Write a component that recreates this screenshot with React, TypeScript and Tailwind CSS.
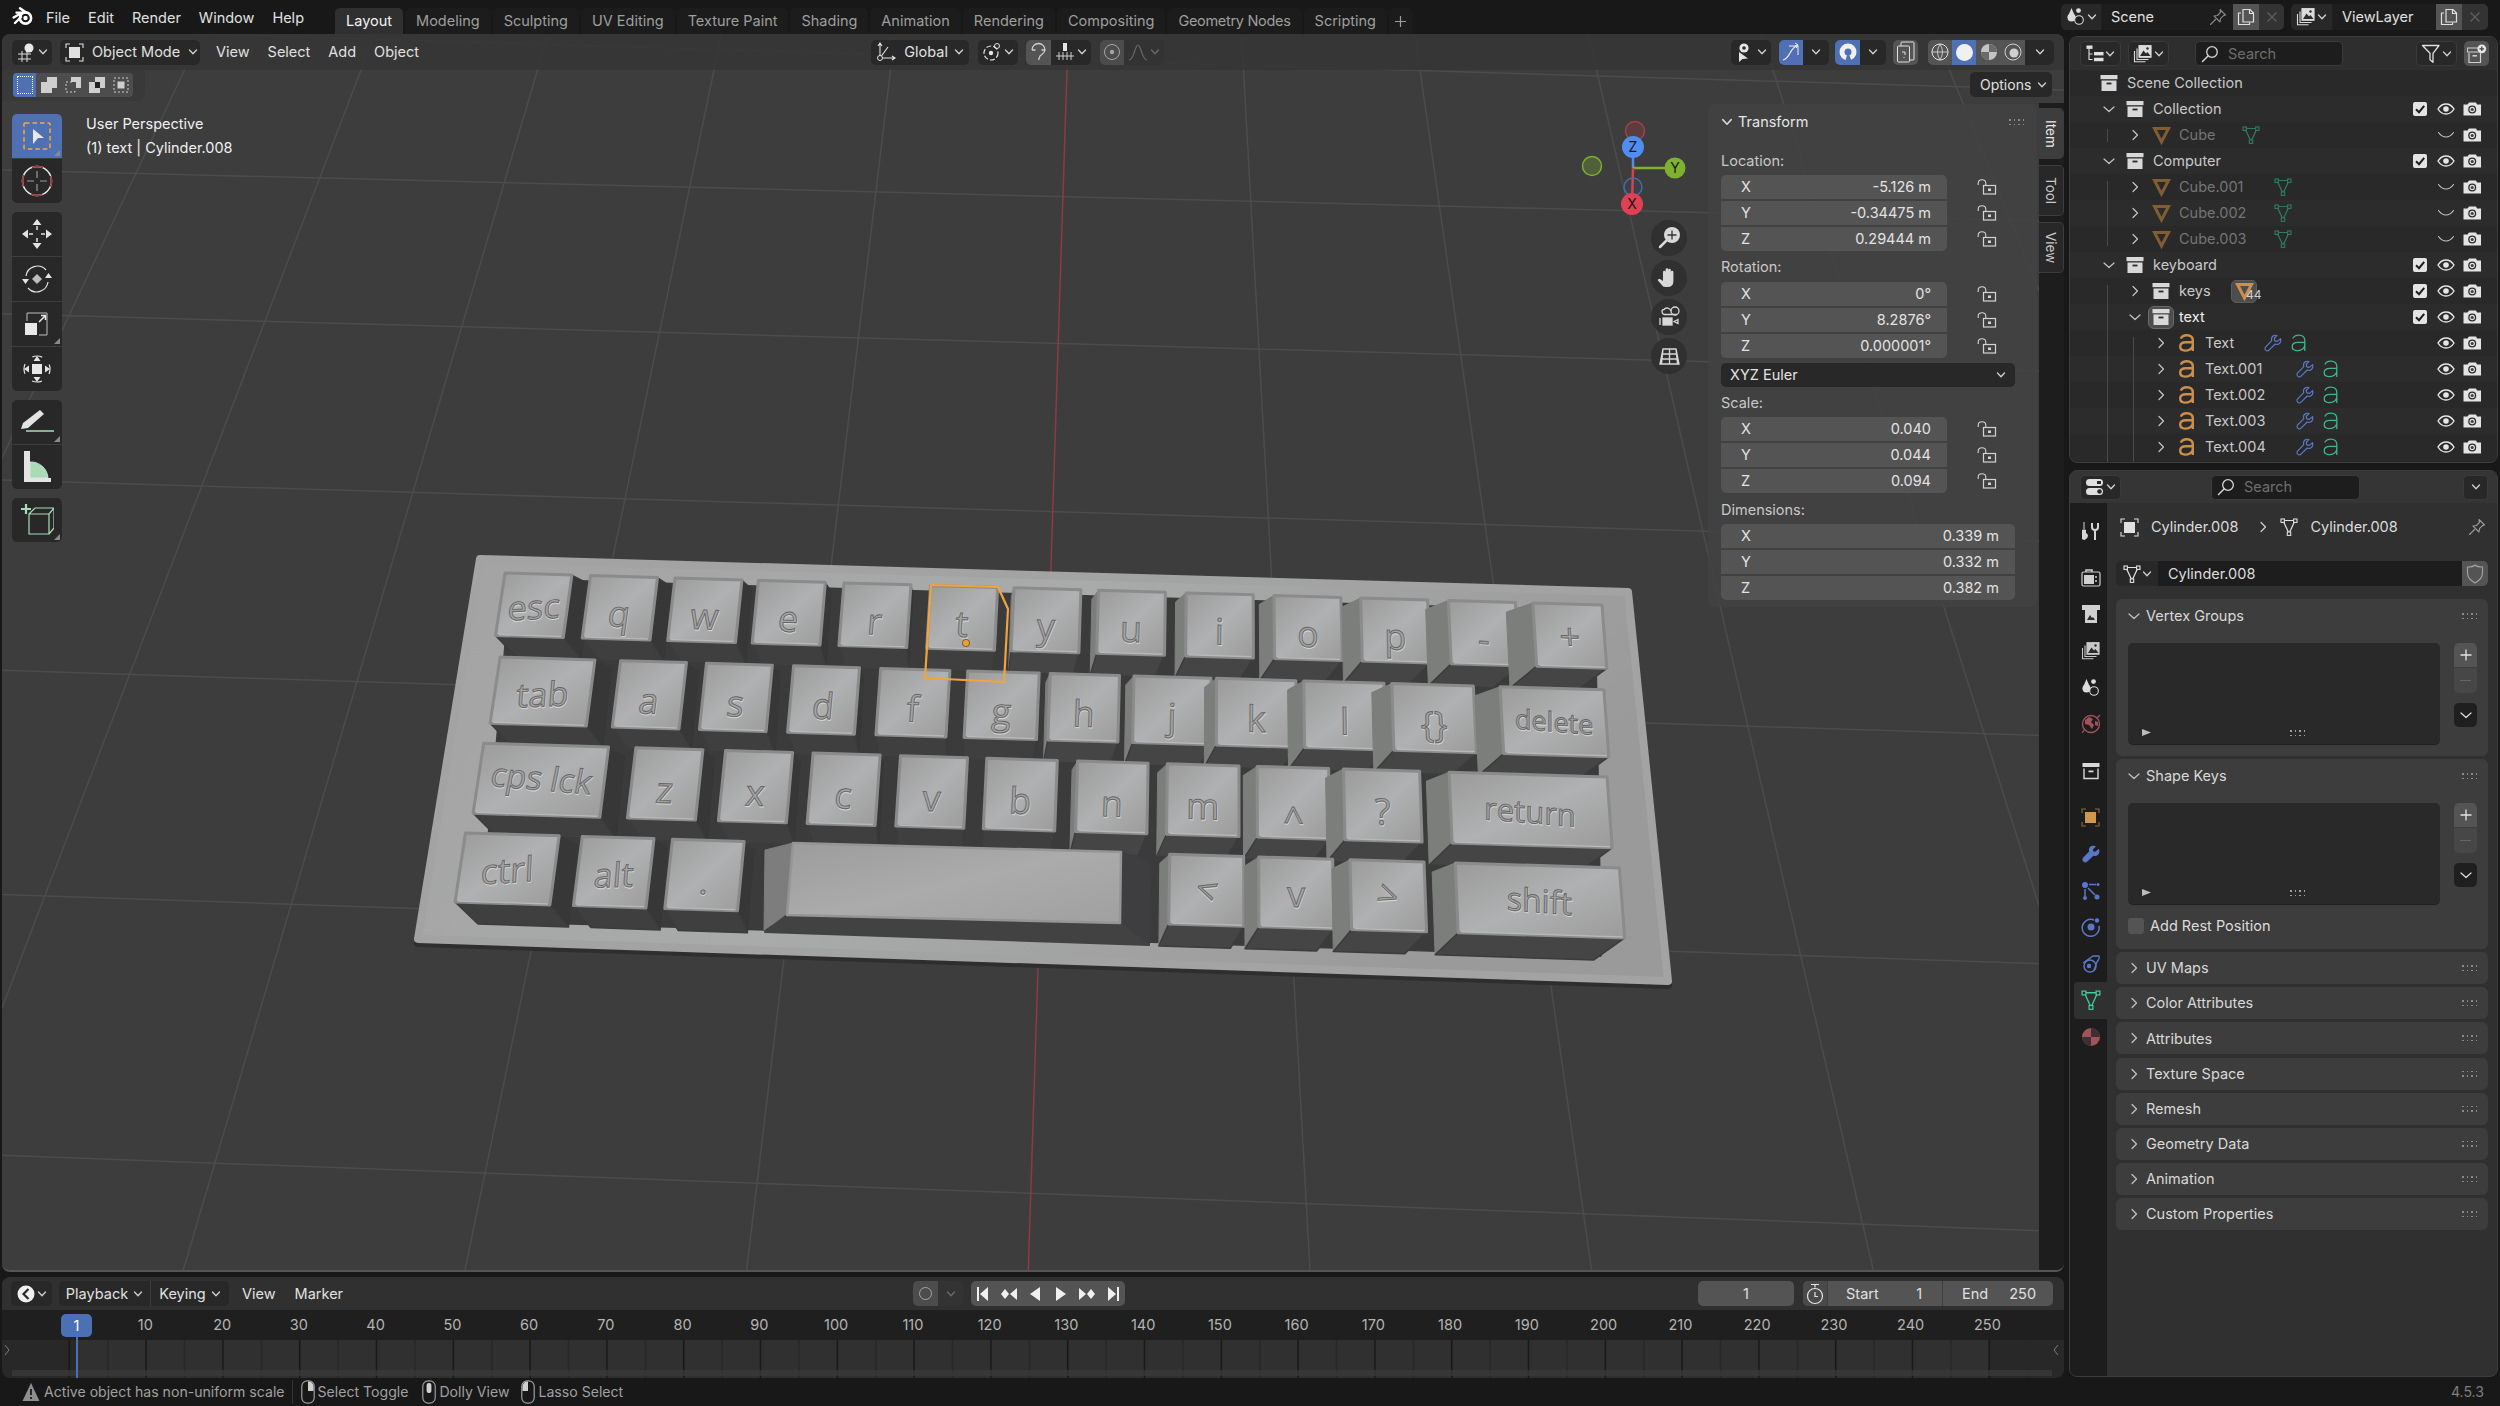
import type { ReactNode } from "react";

// ---- small icons -------------------------------------------------------

function Svg({ w = 18, h = 18, vb, children, className }: { w?: number; h?: number; vb?: string; children: ReactNode; className?: string }) {
  return (
    <svg width={w} height={h} viewBox={vb ?? `0 0 ${w} ${h}`} fill="none" className={`shrink-0 ${className ?? ""}`}>
      {children}
    </svg>
  );
}

const ChevD = ({ s = 10, className = "text-[#d0d0d0]" }: { s?: number; className?: string }) => (
  <Svg w={s} h={s} vb="0 0 10 10" className={className}>
    <path d="M1.5 3 5 6.8 8.5 3" stroke="currentColor" strokeWidth="1.3" strokeLinecap="round" strokeLinejoin="round" />
  </Svg>
);
const ChevR = ({ s = 12, className = "text-[#c4c4c4]" }: { s?: number; className?: string }) => (
  <Svg w={s} h={s} vb="0 0 12 12" className={className}>
    <path d="M4 1.5 8.5 6 4 10.5" stroke="currentColor" strokeWidth="1.2" strokeLinecap="round" strokeLinejoin="round" />
  </Svg>
);
const ChevDown12 = ({ className = "text-[#c4c4c4]" }: { className?: string }) => (
  <Svg w={12} h={12} className={className}>
    <path d="M1 4 6 8.5 11 4" stroke="currentColor" strokeWidth="1.2" strokeLinecap="round" strokeLinejoin="round" />
  </Svg>
);

const Blender = () => (
  <Svg w={22} h={20} vb="0 0 22 20">
    <circle cx="13.5" cy="12" r="5.6" stroke="#fff" strokeWidth="2.6" />
    <circle cx="13.5" cy="12" r="2.2" fill="#fff" />
    <path d="M1.6 11.5 9.5 7M4.5 6.6h7.5M8 2.2l6.5 4.6M3 17l6-6" stroke="#fff" strokeWidth="2.4" strokeLinecap="round" />
  </Svg>
);

const Box = ({ s = 18, c = "#d8d8d8" }: { s?: number; c?: string }) => (
  <Svg w={s} h={s} vb="0 0 18 18">
    <rect x="0.5" y="1" width="17" height="4.2" fill={c} />
    <path d="M1.5 6.5h15V17h-15z" fill={c} />
    <rect x="6.5" y="8.6" width="5" height="1.8" fill="#2a2a2a" />
  </Svg>
);
const BoxOutline = ({ c = "#d8d8d8" }: { c?: string }) => (
  <Svg w={18} h={18}>
    <rect x="0.5" y="1" width="17" height="4" fill={c} />
    <path d="M2 6.5v10h14v-10" stroke={c} strokeWidth="1.4" />
    <rect x="6.5" y="8.5" width="5" height="1.8" fill={c} />
  </Svg>
);

const MeshObj = ({ c = "#c98a44" }: { c?: string }) => (
  <Svg w={19} h={19}>
    <path d="M2.500 2.500h14L9.500 16z" stroke={c} strokeWidth="3" strokeLinejoin="miter" />
  </Svg>
);
const MeshData = ({ c = "#3ea07c", s = 18 }: { c?: string; s?: number }) => (
  <Svg w={s} h={s} vb="0 0 18 18">
    <path d="M3 2.5h12L9 15.5z" stroke={c} strokeWidth="1.2" fill="none" />
    <rect x="1" y="1" width="3.4" height="3.4" fill="#2a2a2a" stroke={c} strokeWidth="1.1" />
    <rect x="13.6" y="1" width="3.4" height="3.4" fill="#2a2a2a" stroke={c} strokeWidth="1.1" />
    <rect x="7.3" y="14" width="3.4" height="3.4" fill="#2a2a2a" stroke={c} strokeWidth="1.1" />
  </Svg>
);
const Wrench = ({ c = "#5a78c8", filled = false }: { c?: string; filled?: boolean }) => (
  <Svg w={18} h={18}>
    <path
      d="M16.6 4.6 13.4 7.4 10.8 6.8 10.2 4.2 13 1.6C10.8.7 8.2 1.8 7.6 4c-.3 1-.1 1.9.2 2.7L1.7 12.8c-1 1-.9 2.4 0 3.3.9.9 2.4 1 3.3 0l6.2-6.1c.9.4 1.9.5 2.9.2 2.2-.7 3.3-3.400 2.500-5.600z"
      stroke={c}
      strokeWidth="1.2"
      fill={filled ? c : "none"}
      strokeLinejoin="round"
    />
  </Svg>
);
// font object icon
const FontIcon = ({ c, sw }: { c: string; sw: number }) => (
  <Svg w={18} h={18}>
    <path
      d="M2.800 4.600C3.800 2.200 6.200 1.200 8.800 1.200c3.800 0 6 1.900 6 5.400v10.400M14.800 8.300H8c-3.400 0-5.800 1.200-5.800 4.300 0 2.700 2.100 4 4.700 4 3.800 0 7.900-1.900 7.900-5.500"
      stroke={c}
      strokeWidth={sw}
    />
  </Svg>
);

const Eye = () => (
  <Svg w={18} h={12} vb="0 0 18 12">
    <path d="M1 6c2-3.200 4.800-5 8-5s6 1.800 8 5c-2 3.200-4.800 5-8 5S3 9.200 1 6z" stroke="#e6e6e6" strokeWidth="1.400" />
    <circle cx="9" cy="6" r="2.800" fill="#e6e6e6" />
  </Svg>
);
const EyeOff = () => (
  <Svg w={18} h={12} vb="0 0 18 12">
    <path d="M1.500 3.500C4 7 6.500 8 9 8s5-1 7.500-4.500" stroke="#c4c4c4" strokeWidth="1.100" strokeLinecap="round" />
  </Svg>
);
const Cam = () => (
  <Svg w={18} h={14} vb="0 0 18 14">
    <path d="M0.500 2.500h4l1.500-2h7l1 2h4v11h-17.500z" fill="#e4e4e4" />
    <circle cx="9.200" cy="7.500" r="4" fill="#2a2a2a" />
    <circle cx="9.200" cy="7.500" r="2.700" fill="#e4e4e4" />
    <circle cx="9.200" cy="7.500" r="1.500" fill="#3a3a3a" />
  </Svg>
);
const Check = () => (
  <div className="w-[14px] h-[14px] rounded-[2px] bg-[#e4e4e4] flex items-center justify-center">
    <Svg w={12} h={12}>
      <path d="M2 6.300 5 9.200 10.200 2.800" stroke="#1e1e1e" strokeWidth="2" />
    </Svg>
  </div>
);
const Pin = ({ c = "#9a9a9a" }: { c?: string }) => (
  <Svg w={18} h={18}>
    <path d="M11 1.500 16.500 7l-2 .6-3 3-.5 3.400-6-6 3.400-.5 3-3zM6.500 11.500l-5 5" stroke={c} strokeWidth="1.100" strokeLinejoin="round" strokeLinecap="round" />
  </Svg>
);
const Copy = ({ c = "#e0e0e0" }: { c?: string }) => (
  <Svg w={18} h={18}>
    <path d="M6 1.500h7l3.500 3.500v9H6z" stroke={c} strokeWidth="1.200" />
    <path d="M4 5H1.500v11.500h11V14.500" stroke={c} strokeWidth="1.200" />
    <path d="M12.500 1.500v4h4" stroke={c} strokeWidth="1.200" />
  </Svg>
);
const X = ({ c = "#5e5e5e" }: { c?: string }) => (
  <Svg w={12} h={12}>
    <path d="M1.500 1.500l9 9m0-9l-9 9" stroke={c} strokeWidth="1.300" />
  </Svg>
);
const Scene = () => (
  <Svg w={20} h={20}>
    <path d="M5.500 1 9.500 10.500H1.500z" fill="#dcdcdc" />
    <circle cx="5.500" cy="10.500" r="4" fill="#dcdcdc" />
    <circle cx="12.500" cy="3.600" r="2.400" fill="#dcdcdc" />
    <circle cx="13" cy="13" r="4.300" fill="#1f1f1f" stroke="#dcdcdc" strokeWidth="1.100" />
  </Svg>
);
const Layers = ({ c = "#dcdcdc" }: { c?: string }) => (
  <Svg w={20} h={18} vb="0 0 20 18">
    <rect x="6" y="0.700" width="12" height="11.500" stroke={c} strokeWidth="1.200" fill={c} />
    <path d="M7 11l3.500-5.500 2.500 3 1.500-1.500 3 4z" fill="#2a2a2a" />
    <circle cx="14.500" cy="3.500" r="1.200" fill="#2a2a2a" />
    <path d="M4 3.500v11h11.500M1.500 6v10.800h11" stroke={c} strokeWidth="1.100" />
  </Svg>
);
const Search = ({ c = "#d8d8d8" }: { c?: string }) => (
  <Svg w={18} h={18}>
    <circle cx="11" cy="7" r="5.300" stroke={c} strokeWidth="1.300" />
    <path d="M7 11 1.500 16.500" stroke={c} strokeWidth="1.500" strokeLinecap="round" />
  </Svg>
);
const OutlinerIcon = () => (
  <Svg w={18} h={18}>
    <rect x="0.500" y="0.500" width="6" height="3.400" fill="#e0e0e0" />
    <path d="M3 4v10.500h3.500M3 9h3.500" stroke="#e0e0e0" strokeWidth="1.100" />
    <rect x="8" y="7" width="9.500" height="3.400" fill="#e0e0e0" />
    <rect x="8" y="12.800" width="9.500" height="3.400" fill="#e0e0e0" />
  </Svg>
);
const Funnel = () => (
  <Svg w={20} h={20}>
    <path d="M1.500 1.500h16.500L12 9.300v9l-3-2.500V9.300z" stroke="#e0e0e0" strokeWidth="1.300" strokeLinejoin="round" />
  </Svg>
);
const NewColl = () => (
  <Svg w={20} h={20}>
    <rect x="0.500" y="4" width="14" height="4" stroke="#cfcfcf" strokeWidth="1" />
    <path d="M2 9v9.500h11.500V9" stroke="#cfcfcf" strokeWidth="1.200" />
    <rect x="5.500" y="11" width="4.500" height="1.600" fill="#cfcfcf" />
    <circle cx="14.800" cy="4.800" r="4.400" fill="#e4e4e4" />
    <path d="M14.800 2.500v4.600M12.500 4.800h4.600" stroke="#444" strokeWidth="1.300" />
  </Svg>
);
const Grip = ({ c = "#8a8a8a" }: { c?: string }) => (
  <div className="grid grid-cols-4 gap-x-[3px] gap-y-[3px]">
    {[0, 1, 2, 3, 4, 5, 6, 7].map((i) => (
      <span key={i} className="w-[1.500px] h-[1.500px]" style={{ background: c }} />
    ))}
  </div>
);
const Lock = () => (
  <Svg w={20} h={16} vb="0 0 20 16">
    <path d="M1.200 6V4.200C1.200 2 3 .800 5 .800s3.800 1.200 3.800 3.400V6" stroke="#d4d4d4" strokeWidth="1.100" />
    <rect x="6.500" y="6.500" width="12" height="8.500" stroke="#d4d4d4" strokeWidth="1.200" />
    <rect x="11" y="9.500" width="3" height="2.500" fill="#d4d4d4" />
  </Svg>
);
const ObjIcon = ({ c = "#e0e0e0", inner = "#e0e0e0" }: { c?: string; inner?: string }) => (
  <Svg w={19} h={19}>
    <path d="M1 5V1h4M14 1h4v4M18 14v4h-4M5 18H1v-4" stroke={c} strokeWidth="1.100" />
    <rect x="4" y="4" width="11" height="11" fill={inner} />
  </Svg>
);
const Tri = ({ s = 7, c = "#bdbdbd" }: { s?: number; c?: string }) => (
  <Svg w={s + 2} h={s} vb="0 0 9 7">
    <path d="M0 0 9 3.500 0 7z" fill={c} />
  </Svg>
);
const Mouse = ({ b }: { b: "l" | "m" | "r" }) => (
  <Svg w={14} h={24} vb="0 0 14 24">
    <rect x="0.800" y="0.800" width="12.400" height="22.400" rx="5.500" stroke="#9e9e9e" strokeWidth="1.200" />
    {b === "l" && <path d="M7 1.500a5 5 0 0 0-5.500 5V11H7z" fill="#d0d0d0" />}
    {b === "r" && <path d="M7 1.500a5 5 0 0 1 5.500 5V11H7z" fill="#d0d0d0" />}
    {b === "m" && <rect x="4.600" y="3" width="4.800" height="10" rx="2" fill="#d0d0d0" />}
  </Svg>
);

// ---- shared widgets ----------------------------------------------------

const Btn = ({ className = "", children }: { className?: string; children: ReactNode }) => (
  <div className={`h-[25px] rounded-[5px] bg-[#282828] flex items-center justify-center ${className}`}>{children}</div>
);

const Corner = () => (
  <span className="absolute right-[2px] bottom-[2px] w-0 h-0 border-l-[6px] border-l-transparent border-b-[6px] border-b-[#8a8a8a]" />
);

function ToolBtn({ children, active, corner, first, last }: { children: ReactNode; active?: boolean; corner?: boolean; first?: boolean; last?: boolean }) {
  return (
    <div
      className={`relative h-[44px] flex items-center justify-center ${active ? "bg-[#5070b4]" : "bg-[#282828]"} ${first ? "rounded-t-[5px]" : ""} ${last ? "rounded-b-[5px]" : ""}`}
    >
      {children}
      {corner && <Corner />}
    </div>
  );
}

function FieldGroup({ rows, wide }: { rows: [string, string][]; wide?: boolean }) {
  return (
    <div className="flex">
      <div className={`flex flex-col gap-[2px] ${wide ? "w-[294px]" : "w-[226px]"}`}>
        {rows.map(([a, v], i) => (
          <div
            key={a}
            className={`h-[24px] bg-[#545454] flex items-center justify-between pl-[20px] pr-[16px] text-[#e2e2e2] text-[14.500px] ${i === 0 ? "rounded-t-[5px]" : ""} ${i === 2 ? "rounded-b-[5px]" : ""}`}
          >
            <span>{a}</span>
            <span>{v}</span>
          </div>
        ))}
      </div>
      {!wide && (
        <div className="flex flex-col gap-[10px] ml-[30px] pt-[4px]">
          {rows.map(([a]) => (
            <Lock key={a} />
          ))}
        </div>
      )}
    </div>
  );
}

const Label = ({ className = "", children }: { className?: string; children: ReactNode }) => (
  <div className={`h-[20px] flex items-center text-[#c8c8c8] text-[14.500px] ${className}`}>{children}</div>
);

// ---- keyboard drawing --------------------------------------------------

type Pt = [number, number];
const A: Pt = [505, 573];
const B: Pt = [1602, 605];
const C: Pt = [1627, 938];
const D: Pt = [455, 902];

const mix = (p: Pt, q: Pt, t: number): Pt => [p[0] + (q[0] - p[0]) * t, p[1] + (q[1] - p[1]) * t];
const P = (u: number, v: number): Pt => mix(mix(A, B, u), mix(D, C, u), v);
const poly = (pts: Pt[]) => pts.map((p) => `${p[0].toFixed(1)},${p[1].toFixed(1)}`).join(" ");

type K = { t: string; u: number; w?: number; size?: number; rot?: number; dy?: number };
const rows: { v0: number; v1: number; w: number; keys: K[] }[] = [
  {
    v0: 0,
    v1: 0.19,
    w: 0.061,
    keys: [
      { t: "esc", u: 0, size: 34, rot: -5, dy: 14 },
      { t: "q", u: 0.078 },
      { t: "w", u: 0.155 },
      { t: "e", u: 0.231 },
      { t: "r", u: 0.309 },
      { t: "t", u: 0.388 },
      { t: "y", u: 0.464 },
      { t: "u", u: 0.541 },
      { t: "i", u: 0.621 },
      { t: "o", u: 0.701 },
      { t: "p", u: 0.78 },
      { t: "-", u: 0.86 },
      { t: "+", u: 0.937, w: 0.063, dy: 14 },
    ],
  },
  {
    v0: 0.255,
    v1: 0.456,
    w: 0.059,
    keys: [
      { t: "tab", u: 0.007, w: 0.085, size: 34, rot: -4, dy: 15 },
      { t: "a", u: 0.115 },
      { t: "s", u: 0.192 },
      { t: "d", u: 0.27 },
      { t: "f", u: 0.348, w: 0.062 },
      { t: "g", u: 0.426, w: 0.064 },
      { t: "h", u: 0.5, w: 0.062 },
      { t: "j", u: 0.575, w: 0.069 },
      { t: "k", u: 0.649, w: 0.071 },
      { t: "l", u: 0.727, w: 0.072 },
      { t: "{}", u: 0.806, w: 0.073 },
      { t: "delete", u: 0.903, w: 0.093, size: 27, rot: 3, dy: 10 },
    ],
  },
  {
    v0: 0.517,
    v1: 0.73,
    w: 0.059,
    keys: [
      { t: "cps lck", u: 0.004, w: 0.11, size: 33, rot: 3, dy: 10 },
      { t: "z", u: 0.138 },
      { t: "x", u: 0.217 },
      { t: "c", u: 0.294 },
      { t: "v", u: 0.371 },
      { t: "b", u: 0.447, w: 0.062 },
      { t: "n", u: 0.527, w: 0.062 },
      { t: "m", u: 0.606, w: 0.063 },
      { t: "^", u: 0.685, w: 0.063, dy: 30 },
      { t: "?", u: 0.761, w: 0.067 },
      { t: "return", u: 0.854, w: 0.139, size: 31, rot: 3, dy: 13 },
    ],
  },
  {
    v0: 0.79,
    v1: 1,
    w: 0.062,
    keys: [
      { t: "ctrl", u: 0, w: 0.081, size: 35, rot: -6, dy: 14 },
      { t: "alt", u: 0.101, size: 34, rot: -3, dy: 15 },
      { t: ".", u: 0.179 },
      { t: "<", u: 0.609, w: 0.064, dy: 12, rot: 18 },
      { t: "v", u: 0.686, w: 0.064, dy: 14 },
      { t: ">", u: 0.765, w: 0.064, dy: 12, rot: 18 },
      { t: "shift", u: 0.856, w: 0.142, size: 32, rot: 3, dy: 12 },
    ],
  },
];

function Key({ k, v0, v1, w }: { k: K; v0: number; v1: number; w: number }) {
  const ww = k.w ?? w;
  const tl = P(k.u, v0);
  const tr = P(k.u + ww, v0);
  const br = P(k.u + ww, v1);
  const bl = P(k.u, v1);
  const off = (p: Pt, dy: number): Pt => [p[0] + 0.046 * (955 - p[0]), p[1] + dy];
  const leftSide = tl[0] > 1000;
  const tlB = off(tl, 9);
  const trB = off(tr, 9);
  const brB = off(br, 22);
  const blB = off(bl, 22);
  const c = mix(mix(tl, br, 0.5), mix(tr, bl, 0.5), 0.5);
  const ax = [tr[0] - tl[0], tr[1] - tl[1]];
  const ay = [bl[0] - tl[0], bl[1] - tl[1]];
  const la = Math.hypot(ax[0], ax[1]);
  const lb = Math.hypot(ay[0], ay[1]);
  const m = `matrix(${ax[0] / la} ${ax[1] / la} ${ay[0] / lb} ${ay[1] / lb} ${c[0]} ${c[1]}) rotate(${k.rot ?? 0})`;
  return (
    <g>
      {leftSide ? (
        <polygon points={poly([tl, bl, blB, tlB])} fill="#7c7e7c" stroke="#7c7e7c" strokeWidth="1" />
      ) : (
        <polygon points={poly([tr, br, brB, trB])} fill="#373737" stroke="#373737" strokeWidth="1" />
      )}
      <polygon points={poly([bl, br, brB, blB])} fill={leftSide ? "#454545" : "#3f3f3f"} stroke="#3c3c3c" strokeWidth="1.500" strokeLinejoin="round" />
      <polygon points={poly([tl, tr, br, bl])} fill="url(#keyTop)" stroke="#8b8b8b" strokeWidth="3" strokeLinejoin="round" />
      <line x1={bl[0] + 3} y1={bl[1] - 1} x2={br[0] - 2} y2={br[1] - 1} stroke="#b8b8b8" strokeWidth="1.500" />
      <g transform={m} fontFamily="'Open Sans', sans-serif" fontSize={k.size ?? 36} textAnchor="middle">
        <text y={(k.dy ?? 19) + 1.200} x={0.600} fill="none" stroke="#d2d2d2" strokeWidth="1">
          {k.t}
        </text>
        <text y={k.dy ?? 19} fill="#a4a4a4" stroke="#666666" strokeWidth="0.900">
          {k.t}
        </text>
      </g>
    </g>
  );
}

function ViewportArt() {
  const vp: Pt = [1132, -1944];
  const depth = [-10, -9, -8, -7, -6, -5, -4, -3, -2, -1, 1, 2, 3, 4, 5, 6, 7];
  const lineAt = (x1000: number, y: number) => vp[0] + ((x1000 - vp[0]) * (y - vp[1])) / 2944;
  const hs: [number, number][] = [
    [40, 0.03],
    [180, 0.025],
    [325, 0.028],
    [492, 0.03],
    [683, 0.032],
    [908, 0.034],
    [1170, 0.037],
  ];
  const plate: Pt[] = [
    [480, 559],
    [1628, 592],
    [1668, 981],
    [418, 939],
  ];
  return (
    <svg className="absolute inset-0" width={2062} height={1238} viewBox="2 34 2062 1238">
      <defs>
        <linearGradient id="keyTop" x1="0" y1="0" x2="1" y2="1">
          <stop offset="0" stopColor="#9a9a9a" />
          <stop offset="0.5" stopColor="#b0b1b2" />
          <stop offset="1" stopColor="#9b9b9b" />
        </linearGradient>
        <linearGradient id="plate" x1="0" y1="0" x2="1" y2="0.3">
          <stop offset="0" stopColor="#a3a3a3" />
          <stop offset="0.5" stopColor="#a9aaaa" />
          <stop offset="1" stopColor="#9a9a9a" />
        </linearGradient>
        <linearGradient id="spaceTop" x1="0" y1="0" x2="1" y2="1">
          <stop offset="0" stopColor="#9c9c9c" />
          <stop offset="0.5" stopColor="#ababab" />
          <stop offset="1" stopColor="#a0a0a0" />
        </linearGradient>
      </defs>

      {/* grid */}
      {depth.map((i) => {
        const x = 1037 + 258 * i;
        return <line key={i} x1={lineAt(x, 34)} y1={34} x2={lineAt(x, 1272)} y2={1272} stroke="#4c4c4c" strokeWidth="1.500" />;
      })}
      {hs.map(([y, s]) => (
        <line key={y} x1={0} y1={y - 400 * s} x2={2064} y2={y + 1664 * s} stroke="#4c4c4c" strokeWidth="1.500" />
      ))}
      <line x1={lineAt(1037, 34)} y1={34} x2={lineAt(1037, 1272)} y2={1272} stroke="#8c3a46" strokeWidth="1.500" />

      {/* keyboard base */}
      <polygon points={poly(plate.map((p) => [p[0], p[1] + 4] as Pt))} fill="#2e2e2e" stroke="#2e2e2e" strokeWidth="8" strokeLinejoin="round" />
      <polygon points={poly(plate)} fill="url(#plate)" stroke="#a3a3a3" strokeWidth="8" strokeLinejoin="round" />
      <polygon points={poly([[512, 580], [1594, 612], [1600, 955], [482, 920]])} fill="#3b3b3b" stroke="#3b3b3b" strokeWidth="4" strokeLinejoin="round" />

      {rows.map((r) => r.keys.map((k) => <Key key={k.t + k.u} k={k} v0={r.v0} v1={r.v1} w={r.w} />))}

      {/* spacebar */}
      <polygon points="765,850 793,843 787,915 764,930" fill="#7d7d7d" stroke="#7d7d7d" strokeLinejoin="round" />
      <polygon points="1121,852 1150,863 1149,945 1120,923" fill="#3e3e40" stroke="#3e3e40" strokeWidth="2" strokeLinejoin="round" />
      <polygon points="787,915 1120,923 1149,945 765,932" fill="#424242" stroke="#424242" strokeWidth="2" strokeLinejoin="round" />
      <polygon points="793,843 1121,852 1120,923 787,915" fill="url(#spaceTop)" stroke="#959595" strokeWidth="2.500" strokeLinejoin="round" />

      {/* selection */}
      <polygon points="931,585 998,587 1008,609 1004,682 925,678" fill="none" stroke="#f3a33b" strokeWidth="2.200" strokeLinejoin="round" />
      <circle cx="966" cy="643" r="3.600" fill="#f0a030" stroke="#2e2e2e" strokeWidth="0.600" />

      {/* nav gizmo */}
      <line x1="1633" y1="168" x2="1633" y2="147" stroke="#4f8ef0" strokeWidth="2.500" />
      <line x1="1633" y1="168" x2="1675" y2="168" stroke="#7eb22e" strokeWidth="2.500" />
      <line x1="1633" y1="168" x2="1632" y2="204" stroke="#d9404f" strokeWidth="2.500" />
      <circle cx="1635" cy="131" r="9.500" fill="#d9404f" fillOpacity="0.2" stroke="#a3404b" strokeWidth="1.400" />
      <circle cx="1592" cy="166" r="9.500" fill="#7eb22e" fillOpacity="0.3" stroke="#7eb22e" strokeWidth="1.400" />
      <circle cx="1633" cy="187" r="9" fill="#4f8ef0" fillOpacity="0.05" stroke="#3f6fb5" strokeWidth="1.400" />
      <circle cx="1633" cy="147" r="11" fill="#4f8ef0" />
      <circle cx="1675" cy="168" r="10.500" fill="#7eb22e" />
      <circle cx="1632" cy="204" r="11" fill="#df4153" />
      <g fontFamily="Inter, sans-serif" fontSize="14" textAnchor="middle" fill="#161616">
        <text x="1633" y="152">Z</text>
        <text x="1675" y="173">Y</text>
        <text x="1632" y="209">X</text>
      </g>

      {/* nav buttons */}
      {[238, 278, 317, 356].map((y) => (
        <circle key={y} cx="1669" cy={y} r="18" fill="#2e2e2e" fillOpacity="0.85" />
      ))}
      <circle cx="1672" cy="235" r="8" fill="#d8d8d8" />
      <path d="M1672 230.500v9M1667.500 235h9" stroke="#333" strokeWidth="1.300" />
      <path d="M1666 241l-6 6" stroke="#d8d8d8" strokeWidth="2.500" strokeLinecap="round" />
      <path
        d="M1660 279l3 2v-9a1.300 1.300 0 0 1 2.600 0v4v-6.500a1.300 1.300 0 0 1 2.600 0v6.500v-6a1.300 1.300 0 0 1 2.600 0v6.500v-4.500a1.300 1.300 0 0 1 2.600 0v9q0 6-6 6h-2q-2.500 0-4-2.500l-3.500-4q-.5-1.500 1.100-1.500z"
        fill="#d8d8d8"
      />
      <g stroke="#d8d8d8" strokeWidth="1.300" fill="none">
        <circle cx="1675" cy="311" r="4" />
        <path d="M1671 311a4 4 0 0 0-7-1.500q-2 0-2 2t2 3h13" />
        <rect x="1663" y="318" width="9" height="7" fill="#d8d8d8" />
        <path d="M1674 321.500l4-2v4zM1660 318v7" />
        <path d="M1660 364h19l-3-15h-13zM1663 349l-1.500 15M1669.500 349v15M1676 349l1.500 15M1662 354h15M1661 359h17" />
      </g>
    </svg>
  );
}

// ---- viewport ----------------------------------------------------------

const tabs = ["Layout", "Modeling", "Sculpting", "UV Editing", "Texture Paint", "Shading", "Animation", "Rendering", "Compositing", "Geometry Nodes", "Scripting"];

function SelectModeRow() {
  return (
    <div className="absolute left-0 top-[36px] w-[143px] h-[31px] bg-[#383838]/90 rounded-br-[8px] pl-[11px] pt-[3px]">
      <div className="flex h-[24px] w-[120px] rounded-[4px] overflow-hidden bg-[#4d4d4d] gap-[1px]">
        <div className="w-[24px] bg-[#5070b4] flex items-center justify-center">
          <span className="block w-[16px] h-[18px] border-[1.500px] border-dotted border-white" />
        </div>
        <div className="w-[24px] flex items-center justify-center">
          <Svg w={18} h={18}>
            <path d="M7 1h10v11h-5v5H1V6h6z" fill="#cfcfcf" />
          </Svg>
        </div>
        <div className="w-[24px] flex items-center justify-center">
          <Svg w={18} h={18}>
            <path d="M7 6V1h10v11h-5V6z" fill="#cfcfcf" />
            <path d="M2 6h6M2 8v8h9v-3" stroke="#cfcfcf" strokeDasharray="2 2" />
          </Svg>
        </div>
        <div className="w-[24px] flex items-center justify-center">
          <Svg w={18} h={18}>
            <path d="M7 6V1h10v11h-5V6z" fill="#cfcfcf" />
            <path d="M1 6h6v6h5v5H1z" fill="#cfcfcf" />
            <rect x="7" y="6" width="5" height="6" fill="#222" />
          </Svg>
        </div>
        <div className="w-[24px] flex items-center justify-center">
          <Svg w={18} h={18}>
            <rect x="2" y="2" width="14" height="14" stroke="#cfcfcf" strokeDasharray="2 2" />
            <rect x="5.500" y="5.500" width="7" height="7" fill="#cfcfcf" />
          </Svg>
        </div>
      </div>
    </div>
  );
}

function Toolbar() {
  return (
    <div className="absolute left-[10px] top-[80px] w-[50px] flex flex-col gap-[9px]">
      <div className="flex flex-col gap-[1px]">
        <ToolBtn first active corner>
          <Svg w={30} h={30}>
            <rect x="2" y="2" width="26" height="26" rx="1" stroke="#f3a93a" strokeWidth="1.500" strokeDasharray="4.500 3" />
            <path d="M11 8 22 17h-6l-5 6z" fill="#e8e8e8" />
          </Svg>
        </ToolBtn>
        <ToolBtn last>
          <Svg w={32} h={32}>
            <circle cx="16" cy="16" r="14.500" stroke="#e8e8e8" strokeWidth="1.500" />
            <circle cx="16" cy="16" r="14.500" stroke="#9e3a3a" strokeWidth="1.600" strokeDasharray="11.400 11.400" strokeDashoffset="5.700" />
            <path d="M16 6v7M16 19v7M6 16h7M19 16h7" stroke="#9a9a9a" strokeWidth="1.200" />
          </Svg>
        </ToolBtn>
      </div>
      <div className="flex flex-col gap-[1px]">
        <ToolBtn first>
          <Svg w={32} h={32}>
            <path d="M16 1l4.500 6h-9zM16 31l-4.500-6h9zM1 16l6-4.500v9zM31 16l-6 4.500v-9z" fill="#e4e4e4" />
            <path d="M16 8v4M16 20v4M8 16h4M20 16h4" stroke="#e4e4e4" strokeWidth="1.500" />
          </Svg>
        </ToolBtn>
        <ToolBtn>
          <Svg w={32} h={32}>
            <path d="M16 11l5 5-5 5-5-5z" fill="#bdbdbd" />
            <path d="M5 13a11.500 11.500 0 0 1 20-6M27 19a11.500 11.500 0 0 1-20 6" stroke="#e4e4e4" strokeWidth="1.200" />
            <path d="M1 16h7l-3.500 5zM24 15h7l-3.500-5z" fill="#e4e4e4" />
          </Svg>
        </ToolBtn>
        <ToolBtn corner>
          <Svg w={26} h={26}>
            <rect x="1" y="12" width="12" height="12" fill="#e8e8e8" />
            <path d="M3 10V2h20v22h-8" stroke="#bdbdbd" strokeWidth="1" />
            <path d="M15 11l6-6M17 4.500h4.500V9" stroke="#e8e8e8" strokeWidth="1.500" />
          </Svg>
        </ToolBtn>
        <ToolBtn first={false} last>
          <Svg w={30} h={30}>
            <rect x="10" y="10" width="10" height="10" fill="#e8e8e8" />
            <circle cx="15" cy="15" r="13" stroke="#e4e4e4" strokeWidth="1.200" strokeDasharray="10 10.400" strokeDashoffset="5" />
            <path d="M15 2l3.500 5h-7zM15 28l-3.500-5h7zM2 15l5-3.500v7zM28 15l-5 3.500v-7z" fill="#e4e4e4" />
          </Svg>
        </ToolBtn>
      </div>
      <div className="flex flex-col gap-[1px]">
        <ToolBtn first corner>
          <Svg w={34} h={28}>
            <path d="M1 21 3 15 20 2l4 4L8 20z" fill="#e4e4e4" />
            <path d="M6 23h28" stroke="#a9dcb6" strokeWidth="1.500" />
          </Svg>
        </ToolBtn>
        <ToolBtn last>
          <Svg w={30} h={34}>
            <path d="M2 1h6v27h21v4H2z" fill="#e4e4e4" />
            <path d="M8 12a17 17 0 0 1 18 16H8z" fill="#a9dcb6" stroke="#e4e4e4" strokeWidth="0.800" />
          </Svg>
        </ToolBtn>
      </div>
      <div>
        <ToolBtn first last corner>
          <Svg w={34} h={34}>
            <path d="M9 11h20v20H9zM9 11l6-6h19v20l-5 6M29 11l5-6" stroke="#a9dcb6" strokeWidth="1.200" />
            <path d="M6 1v10M1 6h10" stroke="#a9dcb6" strokeWidth="2.200" />
          </Svg>
        </ToolBtn>
      </div>
    </div>
  );
}

function NPanel() {
  return (
    <>
      <div className="absolute left-[1706px] top-[70px] w-[329px] h-[503px] rounded-[6px] bg-[#424242]/85 px-[13px] text-[#e2e2e2]">
        <div className="h-[36px] flex items-center">
          <ChevD s={12} className="text-[#d8d8d8]" />
          <span className="ml-[5px] text-[14.500px] text-[#e6e6e6]">Transform</span>
          <div className="ml-auto">
            <Grip />
          </div>
        </div>
        <Label className="mt-[11px] mb-[4px]">Location:</Label>
        <FieldGroup rows={[["X", "-5.126 m"], ["Y", "-0.34475 m"], ["Z", "0.29444 m"]]} />
        <Label className="mt-[6px] mb-[5px]">Rotation:</Label>
        <FieldGroup rows={[["X", "0°"], ["Y", "8.2876°"], ["Z", "0.000001°"]]} />
        <div className="mt-[5px] h-[24px] w-[294px] rounded-[5px] bg-[#282828] flex items-center justify-between px-[9px] text-[14.500px]">
          <span>XYZ Euler</span>
          <ChevD />
        </div>
        <Label className="mt-[6px] mb-[4px]">Scale:</Label>
        <FieldGroup rows={[["X", "0.040"], ["Y", "0.044"], ["Z", "0.094"]]} />
        <Label className="mt-[7px] mb-[4px]">Dimensions:</Label>
        <FieldGroup wide rows={[["X", "0.339 m"], ["Y", "0.332 m"], ["Z", "0.382 m"]]} />
      </div>
      <div className="absolute right-0 top-[69px] bottom-0 w-[25px] bg-[#1d1d1d] pt-[5px] flex flex-col gap-[6px] text-[13.500px] text-[#c8c8c8]">
        {["Item", "Tool", "View"].map((t, i) => (
          <div
            key={t}
            className={`h-[51px] rounded-r-[5px] border border-l-0 border-[#3d3d3d] flex items-center justify-center ${i === 0 ? "bg-[#3d3d3d] text-[#e8e8e8]" : "bg-[#282828]"}`}
          >
            <span className="[writing-mode:vertical-rl]">{t}</span>
          </div>
        ))}
      </div>
      <div className="absolute left-[1968px] top-[38px] w-[82px] h-[25px] rounded-[5px] bg-[#282828] flex items-center pl-[10px] gap-[6px] text-[14px] text-[#e0e0e0]">
        Options <ChevD />
      </div>
    </>
  );
}

function ViewportHeader() {
  return (
    <div className="relative h-[36px] bg-[#353535]/85 flex items-center pl-[10px] text-[14.500px] text-[#e0e0e0]">
      <Btn className="w-[40px] gap-[1px]">
        <Svg w={20} h={20}>
          <path d="M1 12h13M1 17h13M5 9v11M10 9v11" stroke="#dcdcdc" strokeWidth="1" />
          <circle cx="12" cy="6" r="4.500" fill="#e8e8e8" />
        </Svg>
        <ChevD />
      </Btn>
      <Btn className="ml-[8px] w-[140px] gap-[8px] justify-start pl-[5px]">
        <ObjIcon />
        <span>Object Mode</span>
        <ChevD />
      </Btn>
      <div className="ml-[16px] flex gap-[18px]">
        <span>View</span>
        <span>Select</span>
        <span>Add</span>
        <span>Object</span>
      </div>
      <Btn className="ml-[452px] w-[98px] gap-[6px]">
        <Svg w={22} h={22}>
          <path d="M4 17V3M2 5l2-3 2 3M4 17l8-11M4 17h14M16 15l3 2-3 2" stroke="#e4e4e4" strokeWidth="1.100" />
          <circle cx="4" cy="17" r="2.500" fill="#282828" stroke="#e4e4e4" />
        </Svg>
        <span>Global</span>
        <ChevD />
      </Btn>
      <Btn className="ml-[9px] w-[40px] gap-[2px]">
        <Svg w={20} h={20}>
          <circle cx="9" cy="11" r="7" stroke="#e4e4e4" strokeWidth="1.200" strokeDasharray="5 2" />
          <circle cx="9" cy="11" r="2.200" fill="#e4e4e4" />
          <circle cx="15" cy="4" r="2.500" stroke="#e4e4e4" />
        </Svg>
        <ChevD />
      </Btn>
      <div className="ml-[8px] flex h-[25px] w-[65px] rounded-[5px] overflow-hidden bg-[#282828]">
        <div className="w-[25px] bg-[#545454] flex items-center justify-center">
          <Svg w={20} h={20}>
            <path d="M3 8a6.500 6.500 0 0 1 13 0c0 3-3 4-5 6l-1.500 4M3 8h3.500M16 8h-3.500" stroke="#cfcfcf" strokeWidth="1.300" />
          </Svg>
        </div>
        <div className="flex-1 flex items-center justify-center gap-[2px]">
          <Svg w={20} h={20}>
            <rect x="8" y="1" width="4" height="8" fill="#e4e4e4" />
            <path d="M1 14h18M4 10v8M8 10v8M12 10v8M16 10v8" stroke="#cfcfcf" strokeWidth="1" />
          </Svg>
          <ChevD />
        </div>
      </div>
      <div className="ml-[9px] flex h-[25px] w-[64px] rounded-[5px] overflow-hidden bg-[#333]">
        <div className="w-[24px] bg-[#4c4c4c] flex items-center justify-center">
          <Svg w={18} h={18}>
            <circle cx="9" cy="9" r="7.500" stroke="#a4a4a4" />
            <circle cx="9" cy="9" r="2.200" fill="#a4a4a4" />
          </Svg>
        </div>
        <div className="flex-1 flex items-center justify-center gap-[2px]">
          <Svg w={20} h={20}>
            <path d="M1 18c5 0 6-15 9-15s4 15 9 15" stroke="#6a6a6a" strokeWidth="1.200" />
          </Svg>
          <ChevD className="text-[#6a6a6a]" />
        </div>
      </div>
      <div className="ml-auto pr-[10px] flex items-center">
        <Btn className="w-[40px] gap-[2px]">
          <Svg w={20} h={20}>
            <circle cx="9" cy="6" r="4.600" fill="#e4e4e4" />
            <circle cx="9" cy="6" r="1.800" fill="#282828" />
            <path d="M4 10v10l3.500-3 5.500-.5z" fill="#e4e4e4" />
          </Svg>
          <ChevD />
        </Btn>
        <div className="ml-[8px] flex h-[25px] w-[50px] rounded-[5px] overflow-hidden bg-[#282828]">
          <div className="w-[24px] bg-[#5070b4] flex items-center justify-center">
            <Svg w={20} h={20}>
              <path d="M2 18C10 16 8 6 17 3" stroke="#f0f0f0" strokeWidth="1.200" />
              <path d="M8 4h9v9M14 1l3 2-2 3" stroke="#f0f0f0" strokeWidth="1" />
            </Svg>
          </div>
          <div className="flex-1 flex items-center justify-center">
            <ChevD />
          </div>
        </div>
        <div className="ml-[6px] flex h-[25px] w-[51px] rounded-[5px] overflow-hidden bg-[#282828]">
          <div className="w-[25px] bg-[#5070b4] flex items-center justify-center">
            <Svg w={20} h={20}>
              <circle cx="10" cy="10" r="8.500" fill="#f0f0f0" />
              <circle cx="10" cy="10" r="3.500" fill="#5070b4" />
              <path d="M10 10 14 20h-7z" fill="#5070b4" />
            </Svg>
          </div>
          <div className="flex-1 flex items-center justify-center">
            <ChevD />
          </div>
        </div>
        <div className="ml-[7px] w-[25px] h-[25px] rounded-[5px] bg-[#545454] flex items-center justify-center">
          <Svg w={20} h={22}>
            <rect x="5" y="1" width="13" height="18" rx="1" stroke="#e0e0e0" />
            <rect x="1.500" y="5" width="12" height="16" rx="1" fill="#545454" stroke="#e0e0e0" />
            <path d="M6 11h3v3M8 16v1" stroke="#e0e0e0" />
          </Svg>
        </div>
        <div className="ml-[10px] flex h-[25px] w-[126px] rounded-[5px] overflow-hidden bg-[#545454]">
          <div className="w-[24px] flex items-center justify-center">
            <Svg w={18} h={18}>
              <circle cx="9" cy="9" r="8" stroke="#e0e0e0" />
              <path d="M1 9h16M9 1q-5 8 0 16M9 1q5 8 0 16" stroke="#e0e0e0" strokeWidth="0.800" />
            </Svg>
          </div>
          <div className="w-[24px] bg-[#5070b4] flex items-center justify-center">
            <span className="block w-[17px] h-[17px] rounded-full bg-[#f0f0f0]" />
          </div>
          <div className="w-[25px] flex items-center justify-center">
            <Svg w={18} h={18}>
              <circle cx="9" cy="9" r="8" fill="#c4c4c4" />
              <path d="M9 9H1a8 8 0 0 0 8 8zM9 1a8 8 0 0 1 8 8H9z" fill="#6a6a6a" />
            </Svg>
          </div>
          <div className="w-[24px] flex items-center justify-center">
            <Svg w={18} h={18}>
              <circle cx="9" cy="9" r="8" stroke="#d0d0d0" />
              <circle cx="10" cy="10" r="4.500" fill="#d0d0d0" />
            </Svg>
          </div>
          <div className="flex-1 bg-[#282828] flex items-center justify-center">
            <ChevD />
          </div>
        </div>
      </div>
    </div>
  );
}

function Viewport() {
  return (
    <div className="relative h-[1238px] rounded-[8px] overflow-hidden bg-[#3d3d3d] border-b-2 border-[#555]">
      <ViewportArt />
      <ViewportHeader />
      <SelectModeRow />
      <Toolbar />
      <div className="absolute left-[84px] top-[78px] text-[14.500px] leading-[23.500px] text-[#f0f0f0]">
        <div>User Perspective</div>
        <div>(1) text | Cylinder.008</div>
      </div>
      <NPanel />
    </div>
  );
}

// ---- timeline ----------------------------------------------------------

function Timeline() {
  const labels = [];
  for (let f = 10; f <= 250; f += 10) labels.push(f);
  const ticks = [];
  for (let f = 0; f <= 270; f += 5) ticks.push(f);
  const xOf = (f: number) => 74 + (f - 1) * 7.68;
  return (
    <div className="relative mt-[5px] h-[101px] rounded-[8px] overflow-hidden bg-[#1f1f1f]">
      <div className="h-[33px] bg-[#303030] flex items-center pl-[9px] pr-[9px] text-[14.500px] text-[#e0e0e0]">
        <Btn className="w-[41px] gap-[2px]">
          <Svg w={18} h={18}>
            <circle cx="9" cy="9" r="8.500" fill="#f0f0f0" />
            <path d="M11.500 4 6.500 9l5 5" stroke="#282828" strokeWidth="2.200" />
          </Svg>
          <ChevD />
        </Btn>
        <div className="ml-[7px] flex h-[25px] w-[170px] rounded-[5px] bg-[#282828]">
          <div className="w-[92px] flex items-center justify-center gap-[5px] border-r border-[#3c3c3c]">
            Playback <ChevD />
          </div>
          <div className="flex-1 flex items-center justify-center gap-[5px]">
            Keying <ChevD />
          </div>
        </div>
        <span className="ml-[13px]">View</span>
        <span className="ml-[19px]">Marker</span>
        <div className="ml-[570px] flex h-[25px] w-[50px] rounded-[5px] bg-[#333] overflow-hidden">
          <div className="w-[25px] bg-[#4c4c4c] flex items-center justify-center">
            <span className="block w-[13px] h-[13px] rounded-full border border-[#a4a4a4]" />
          </div>
          <div className="flex-1 flex items-center justify-center">
            <ChevD className="text-[#6a6a6a]" />
          </div>
        </div>
        <div className="ml-[8px] flex h-[25px] w-[154px] rounded-[5px] bg-[#545454] overflow-hidden gap-[1px]">
          {[
            <path key="a" d="M3 2h2v14H3zM14 2v14L6 9z" fill="#f0f0f0" />,
            <path key="b" d="M1 9l4-5 4 5-4 5zM10 9l7-6v12z" fill="#f0f0f0" />,
            <path key="c" d="M14 2v14L4 9z" fill="#f0f0f0" />,
            <path key="d" d="M4 2v14l10-7z" fill="#f0f0f0" />,
            <path key="e" d="M1 3l7 6-7 6zM9 9l4-5 4 5-4 5z" fill="#f0f0f0" />,
            <path key="f" d="M13 2h2v14h-2zM4 2v14l8-7z" fill="#f0f0f0" />,
          ].map((p, i) => (
            <div key={i} className="flex-1 flex items-center justify-center">
              <Svg w={18} h={18}>
                {p}
              </Svg>
            </div>
          ))}
        </div>
        <div className="ml-[573px] w-[96px] h-[25px] rounded-[5px] bg-[#545454] flex items-center justify-center">1</div>
        <div className="ml-[9px] flex h-[25px] w-[250px] rounded-[5px] bg-[#545454] overflow-hidden">
          <div className="w-[24px] bg-[#4a4a4a] flex items-center justify-center">
            <Svg w={18} h={22}>
              <circle cx="9" cy="13" r="7.500" stroke="#e4e4e4" strokeWidth="1.200" />
              <path d="M5 1.500h8M9 1.500v3M9 9v4.500h3" stroke="#e4e4e4" strokeWidth="1.200" />
            </Svg>
          </div>
          <div className="w-[116px] flex items-center justify-between pl-[18px] pr-[20px] border-x border-[#3e3e3e]">
            <span>Start</span>
            <span>1</span>
          </div>
          <div className="flex-1 flex items-center justify-between pl-[19px] pr-[17px]">
            <span>End</span>
            <span>250</span>
          </div>
        </div>
      </div>
      <div className="h-[30px] bg-[#1f1f1f] flex items-center pl-[105px] text-[14.500px] text-[#b4b4b4]">
        {labels.map((f) => (
          <span key={f} className="w-[76.760px] shrink-0 text-center">
            {f}
          </span>
        ))}
      </div>
      <svg className="block" width={2062} height={38}>
        <rect width={2062} height={38} fill="#282828" />
        <rect x={xOf(1)} width={xOf(250) - xOf(1)} height={38} fill="#303030" />
        {ticks.map((f) => (
          <line key={f} x1={xOf(f) + 1} y1={0} x2={xOf(f) + 1} y2={38} stroke={f % 10 === 0 ? "#191919" : "#282828"} strokeWidth="1.500" />
        ))}
        <rect x={10} y={30} width={2040} height={6} fill="#3b3b3b" fillOpacity="0.7" />
        <path d="M3 5l4 5-4 5" stroke="#7c7c7c" fill="none" />
        <path d="M2056 5l-4 5 4 5" stroke="#7c7c7c" fill="none" />
      </svg>
      {/* current frame marker */}
      <div className="absolute left-[59px] top-[37px] w-[31px] h-[23px] rounded-[5px] bg-[#4c70b4] text-[14.500px] text-white flex items-center justify-center">1</div>
      <div className="absolute left-[74px] top-[60px] bottom-0 w-[2px] bg-[#4c70b4]" />
    </div>
  );
}

// ---- outliner ----------------------------------------------------------

type Row = {
  id: string;
  off: string;
  chev?: "d" | "r";
  icon: ReactNode;
  label: string;
  dim?: boolean;
  bright?: boolean;
  labelW?: string;
  extra?: ReactNode;
  check?: boolean;
  eye?: "on" | "off";
  cam?: boolean;
};

const GreenA = () => <FontIcon c="#3fb58c" sw={1.300} />;
const OrangeA = () => <FontIcon c="#cc8e4d" sw={2.400} />;
const textExtra = (
  <div className="flex items-center gap-[8px]">
    <Wrench />
    <GreenA />
  </div>
);

const outlinerRows: Row[] = [
  { id: "sc", off: "pl-[26px]", icon: <Box />, label: "Scene Collection" },
  { id: "c", off: "pl-[26px]", chev: "d", icon: <Box />, label: "Collection", check: true, eye: "on", cam: true },
  { id: "cube", off: "pl-[52px]", chev: "r", icon: <MeshObj c="#815d33" />, label: "Cube", dim: true, labelW: "w-[68px]", extra: <MeshData c="#2c7d60" />, eye: "off", cam: true },
  { id: "comp", off: "pl-[26px]", chev: "d", icon: <Box />, label: "Computer", check: true, eye: "on", cam: true },
  { id: "c1", off: "pl-[52px]", chev: "r", icon: <MeshObj c="#815d33" />, label: "Cube.001", dim: true, labelW: "w-[100px]", extra: <MeshData c="#2c7d60" />, eye: "off", cam: true },
  { id: "c2", off: "pl-[52px]", chev: "r", icon: <MeshObj c="#815d33" />, label: "Cube.002", dim: true, labelW: "w-[100px]", extra: <MeshData c="#2c7d60" />, eye: "off", cam: true },
  { id: "c3", off: "pl-[52px]", chev: "r", icon: <MeshObj c="#815d33" />, label: "Cube.003", dim: true, labelW: "w-[100px]", extra: <MeshData c="#2c7d60" />, eye: "off", cam: true },
  { id: "kb", off: "pl-[26px]", chev: "d", icon: <Box />, label: "keyboard", check: true, eye: "on", cam: true },
  {
    id: "keys",
    off: "pl-[52px]",
    chev: "r",
    icon: <Box />,
    label: "keys",
    labelW: "w-[57px]",
    extra: (
      <div className="relative w-[26px] h-[23px] rounded-[5px] bg-[#4d4d4d] border border-[#5c5c5c] flex items-center justify-center">
        <MeshObj c="#cd8f4a" />
        <span className="absolute left-[14px] top-[7px] text-[12px] leading-[14px] text-[#d0d0d0]">44</span>
      </div>
    ),
    check: true,
    eye: "on",
    cam: true,
  },
  {
    id: "text",
    off: "pl-[52px]",
    chev: "d",
    icon: (
      <div className="w-[26px] h-[23px] rounded-[6px] bg-[#4d4d4d] border border-[#6a6a6a] flex items-center justify-center">
        <Box />
      </div>
    ),
    label: "text",
    bright: true,
    check: true,
    eye: "on",
    cam: true,
  },
  { id: "t0", off: "pl-[78px]", chev: "r", icon: <OrangeA />, label: "Text", labelW: "w-[64px]", extra: textExtra, eye: "on", cam: true },
  { id: "t1", off: "pl-[78px]", chev: "r", icon: <OrangeA />, label: "Text.001", labelW: "w-[96px]", extra: textExtra, eye: "on", cam: true },
  { id: "t2", off: "pl-[78px]", chev: "r", icon: <OrangeA />, label: "Text.002", labelW: "w-[96px]", extra: textExtra, eye: "on", cam: true },
  { id: "t3", off: "pl-[78px]", chev: "r", icon: <OrangeA />, label: "Text.003", labelW: "w-[96px]", extra: textExtra, eye: "on", cam: true },
  { id: "t4", off: "pl-[78px]", chev: "r", icon: <OrangeA />, label: "Text.004", labelW: "w-[96px]", extra: textExtra, eye: "on", cam: true },
];

function Outliner() {
  return (
    <div className="relative mt-[2px] h-[427px] rounded-[8px] overflow-hidden border border-[#3c3c3c] bg-[#282828] text-[14.500px]">
      <div className="h-[33px] bg-[#2e2e2e] flex items-center pl-[10px] pr-[8px]">
        <Btn className="w-[41px] gap-[1px] bg-[#282828] border border-[#3a3a3a]">
          <OutlinerIcon />
          <ChevD />
        </Btn>
        <Btn className="ml-[7px] w-[41px] gap-[1px] border border-[#3a3a3a]">
          <Layers />
          <ChevD />
        </Btn>
        <div className="ml-[26px] w-[148px] h-[25px] rounded-[5px] bg-[#1d1d1d] border border-[#3a3a3a] flex items-center pl-[5px] gap-[9px] text-[#6e6e6e]">
          <Search />
          Search
        </div>
        <Btn className="ml-auto w-[41px] gap-[1px] border border-[#3a3a3a]">
          <Funnel />
          <ChevD />
        </Btn>
        <div className="ml-[7px] w-[25px] h-[25px] rounded-[5px] bg-[#545454] flex items-center justify-center">
          <NewColl />
        </div>
      </div>
      {outlinerRows.map((r, i) => (
        <div key={r.id} className={`h-[26px] flex items-center ${r.off} pr-[12px] ${i % 2 ? "bg-[#2c2c2c]" : "bg-[#292929]"}`}>
          {r.chev && <div className="w-[26px] flex justify-center">{r.chev === "d" ? <ChevDown12 /> : <ChevR />}</div>}
          <div className="w-[26px] flex justify-center">{r.icon}</div>
          <span className={`pl-[5px] ${r.labelW ?? ""} ${r.dim ? "text-[#757575]" : r.bright ? "text-[#f0f0f0]" : "text-[#c8c8c8]"}`}>{r.label}</span>
          {r.extra}
          <div className="ml-auto flex items-center">
            <div className="w-[26px] flex justify-center">{r.check && <Check />}</div>
            <div className="w-[26px] flex justify-center">{r.eye === "on" ? <Eye /> : r.eye === "off" ? <EyeOff /> : null}</div>
            <div className="w-[26px] flex justify-center">{r.cam && <Cam />}</div>
          </div>
        </div>
      ))}
      {/* tree guide lines */}
      <span className="absolute left-[37px] top-[92px] w-[1px] h-[13px] bg-[#4a4a4a]" />
      <span className="absolute left-[37px] top-[144px] w-[1px] h-[65px] bg-[#4a4a4a]" />
      <span className="absolute left-[37px] top-[248px] w-[1px] h-[180px] bg-[#4a4a4a]" />
      <span className="absolute left-[63px] top-[300px] w-[1px] h-[130px] bg-[#4a4a4a]" />
    </div>
  );
}

// ---- properties --------------------------------------------------------

const TabCell = ({ gap, active, children }: { gap?: boolean; active?: boolean; children: ReactNode }) => (
  <div className={`h-[36.600px] flex items-center justify-center ml-[4px] rounded-l-[4px] ${gap ? "mt-[10px]" : ""} ${active ? "bg-[#303030]" : ""}`}>{children}</div>
);

function PropTabs() {
  return (
    <div className="w-[37px] shrink-0 bg-[#1d1d1d] pt-[10px] pr-0">
      <TabCell>
        <Svg w={20} h={20}>
          <path d="M3 1v7M1.500 9h3v3a2.500 2.500 0 0 1-3 6z" fill="#d6d6d6" stroke="#d6d6d6" />
          <path d="M11 2v4q0 3 3 3t3-3V2M14 9v10" stroke="#d6d6d6" strokeWidth="2" />
        </Svg>
      </TabCell>
      <TabCell gap>
        <Svg w={20} h={20}>
          <rect x="1" y="4" width="18" height="14" rx="1.500" stroke="#d0d0d0" strokeWidth="1.200" />
          <rect x="3" y="7" width="10" height="9" fill="#d0d0d0" />
          <path d="M5 4V2h6v2M15 8v2M15 12v2" stroke="#d0d0d0" strokeWidth="1.500" />
        </Svg>
      </TabCell>
      <TabCell>
        <Svg w={20} h={20}>
          <path d="M1 1h18v5H1z" fill="#d0d0d0" />
          <path d="M4 6h12v13H4z" fill="#d0d0d0" />
          <path d="M6 16l3-5 2 3 1-1 2 3z" fill="#2a2a2a" />
        </Svg>
      </TabCell>
      <TabCell>
        <Layers c="#c8c8c8" />
      </TabCell>
      <TabCell>
        <Scene />
      </TabCell>
      <TabCell>
        <Svg w={20} h={20}>
          <circle cx="10" cy="10" r="8.500" stroke="#a2535a" strokeWidth="1.300" fill="none" />
          <path d="M4 6l4-3 4 2-2 3 3 3-2 4-3-4-4-1zM14 7l3 1 0 4-3-1z" fill="#a2535a" />
          <path d="M1 19 4 15M16 4l3-3" stroke="#a2535a" strokeWidth="1.200" />
        </Svg>
      </TabCell>
      <TabCell gap>
        <BoxOutline />
      </TabCell>
      <TabCell gap>
        <ObjIcon c="#8a6a44" inner="#d09752" />
      </TabCell>
      <TabCell>
        <Wrench filled />
      </TabCell>
      <TabCell>
        <Svg w={20} h={20}>
          <circle cx="4" cy="4" r="3" fill="#5a78c8" />
          <circle cx="17" cy="3.500" r="1.500" fill="#5a78c8" />
          <circle cx="4" cy="17" r="2" fill="#5a78c8" />
          <circle cx="16" cy="16" r="2.500" fill="#5a78c8" />
          <path d="M8 3.500h7M4 8v7M7 7l7 7" stroke="#5a78c8" strokeWidth="1.500" />
        </Svg>
      </TabCell>
      <TabCell>
        <Svg w={20} h={20}>
          <circle cx="10" cy="10" r="3.500" fill="#5a78c8" />
          <circle cx="16" cy="3.500" r="2.200" fill="#5a78c8" />
          <path d="M13 3a8.500 8.500 0 1 0 5 6" stroke="#5a78c8" strokeWidth="1.500" />
        </Svg>
      </TabCell>
      <TabCell>
        <Svg w={20} h={20}>
          <ellipse cx="9" cy="12" rx="6" ry="6" stroke="#5a78c8" strokeWidth="1.500" />
          <circle cx="8" cy="12" r="2.200" fill="#5a78c8" />
          <path d="M2 9 12 2h6q1 2-2 6l-3 8" stroke="#5a78c8" strokeWidth="1.300" />
        </Svg>
      </TabCell>
      <TabCell active>
        <MeshData c="#3fcf9e" s={20} />
      </TabCell>
      <TabCell>
        <Svg w={20} h={20}>
          <circle cx="10" cy="10" r="9" fill="#a2535a" />
          <path d="M10 1a9 9 0 0 1 9 9h-9v9a9 9 0 0 1-9-9h9z" fill="#2a2a2a" fillOpacity="0.85" />
        </Svg>
      </TabCell>
    </div>
  );
}

function ListPanel({ title, children }: { title: string; children?: ReactNode }) {
  return (
    <div className="rounded-[6px] bg-[#3d3d3d] pl-[12px] pr-[11px] pb-[11px]">
      <div className="h-[34px] flex items-center justify-between">
        <div className="flex items-center gap-[6px]">
          <ChevDown12 />
          <span className="text-[#d8d8d8]">{title}</span>
        </div>
        <Grip />
      </div>
      <div className="mt-[10px] flex">
        <div className="relative w-[312px] h-[102px] rounded-[5px] bg-[#292929] border-b border-[#222]">
          <div className="absolute left-[14px] bottom-[8px]">
            <Tri />
          </div>
          <div className="absolute left-[162px] bottom-[8px]">
            <Grip c="#a0a0a0" />
          </div>
        </div>
        <div className="ml-[14px] w-[23px] flex flex-col gap-[1px]">
          <div className="h-[24px] rounded-t-[5px] bg-[#545454] flex items-center justify-center text-[#e4e4e4]">
            <Svg w={12} h={12}>
              <path d="M6 .5v11M.5 6h11" stroke="currentColor" strokeWidth="1.300" />
            </Svg>
          </div>
          <div className="h-[25px] rounded-b-[5px] bg-[#474747] flex items-center justify-center">
            <span className="block w-[11px] h-[1.500px] bg-[#666]" />
          </div>
          <div className="mt-[9px] h-[24px] rounded-[5px] bg-[#1f1f1f] flex items-center justify-center">
            <ChevDown12 className="text-[#e0e0e0]" />
          </div>
        </div>
      </div>
      {children}
    </div>
  );
}

function Properties() {
  const closed = ["UV Maps", "Color Attributes", "Attributes", "Texture Space", "Remesh", "Geometry Data", "Animation", "Custom Properties"];
  return (
    <div className="mt-[7px] h-[907px] rounded-[8px] overflow-hidden border border-[#3c3c3c] bg-[#303030] text-[14.500px] text-[#dcdcdc]">
      <div className="h-[32px] bg-[#353535] flex items-center pl-[10px] pr-[9px]">
        <Btn className="w-[41px] gap-[1px] border border-[#3a3a3a]">
          <Svg w={20} h={20}>
            <rect x="1" y="2" width="17" height="7" rx="3.500" fill="#e0e0e0" />
            <rect x="1" y="11" width="17" height="7" rx="3.500" fill="#e0e0e0" />
            <circle cx="14.500" cy="14.500" r="2.300" fill="#282828" />
            <rect x="12" y="4" width="4" height="3" fill="#282828" />
          </Svg>
          <ChevD />
        </Btn>
        <div className="ml-[90px] w-[149px] h-[25px] rounded-[5px] bg-[#1d1d1d] border border-[#3a3a3a] flex items-center pl-[5px] gap-[9px] text-[#6e6e6e]">
          <Search />
          Search
        </div>
        <Btn className="ml-auto w-[25px] border border-[#3a3a3a]">
          <ChevD />
        </Btn>
      </div>
      <div className="flex h-[875px]">
        <PropTabs />
        <div className="flex-1 min-w-0 px-[9px]">
          <div className="h-[48px] flex items-center pl-[4px] pr-[2px]">
            <ObjIcon />
            <span className="ml-[12px]">Cylinder.008</span>
            <ChevR className="ml-[19px] text-[#d0d0d0]" />
            <div className="ml-[11px]">
              <MeshData c="#e0e0e0" />
            </div>
            <span className="ml-[12px]">Cylinder.008</span>
            <div className="ml-auto">
              <Pin />
            </div>
          </div>
          <div className="mt-[10px] h-[25px] flex rounded-[5px] overflow-hidden bg-[#282828]">
            <div className="w-[42px] flex items-center justify-center gap-[1px]">
              <MeshData c="#e0e0e0" />
              <ChevD />
            </div>
            <div className="w-[304px] bg-[#1d1d1d] flex items-center pl-[10px]">Cylinder.008</div>
            <div className="flex-1 bg-[#545454] flex items-center justify-center">
              <Svg w={18} h={20}>
                <path d="M1.500 3C6 3 8 2 9 1c1 1 3 2 7.500 2v6c0 5-4 8-7.500 10C5.500 17 1.500 14 1.500 9z" stroke="#a0a0a0" strokeWidth="1.200" />
              </Svg>
            </div>
          </div>
          <div className="mt-[13px] flex flex-col gap-[3px]">
            <ListPanel title="Vertex Groups" />
            <ListPanel title="Shape Keys">
              <div className="mt-[13px] flex items-center h-[16px] mb-[4px]">
                <span className="w-[16px] h-[16px] rounded-[3px] bg-[#545454]" />
                <span className="ml-[6px]">Add Rest Position</span>
              </div>
            </ListPanel>
            <div className="flex flex-col gap-[3.200px]">
              {closed.map((t) => (
                <div key={t} className="h-[32px] rounded-[6px] bg-[#3d3d3d] flex items-center pl-[12px] pr-[11px] gap-[6px]">
                  <ChevR />
                  <span className="text-[#d8d8d8]">{t}</span>
                  <div className="ml-auto">
                    <Grip />
                  </div>
                </div>
              ))}
            </div>
          </div>
        </div>
      </div>
    </div>
  );
}

// ---- top + status ------------------------------------------------------

function TopBar() {
  return (
    <div className="h-[34px] flex text-[14.500px] text-[#e0e0e0]">
      <div className="w-[46px] flex items-center justify-end pr-[12px] pb-[2px]">
        <Blender />
      </div>
      <div className="flex gap-[18px] pt-[8px] h-[26px] items-center mt-[1px]">
        <span>File</span>
        <span>Edit</span>
        <span>Render</span>
        <span>Window</span>
        <span>Help</span>
      </div>
      <div className="ml-[31px] mt-[8px] flex gap-[2px] text-[#9e9e9e]">
        {tabs.map((t) => (
          <div
            key={t}
            className={`h-[26px] px-[11px] rounded-t-[5px] flex items-center ${t === "Layout" ? "bg-[#303030] text-[#f0f0f0]" : "bg-[#1c1c1c]"} ${t === "Geometry Nodes" ? "tracking-[-0.3px]" : ""}`}
          >
            {t}
          </div>
        ))}
        <div className="h-[26px] w-[24px] rounded-t-[5px] bg-[#1c1c1c] flex items-center justify-center">
          <Svg w={13} h={13}>
            <path d="M6.500 1v11M1 6.500h11" stroke="#9e9e9e" strokeWidth="1.200" />
          </Svg>
        </div>
      </div>
      <div className="ml-auto pr-[12px] pt-[4px] flex">
        <div className="flex h-[26px] w-[223px] rounded-[5px] bg-[#1f1f1f] overflow-hidden">
          <div className="w-[40px] bg-[#282828] flex items-center justify-center gap-[1px]">
            <Scene />
            <ChevD />
          </div>
          <div className="w-[131px] ml-[1px] bg-[#1d1d1d] flex items-center pl-[9px] pr-[6px] justify-between">
            Scene <Pin c="#888" />
          </div>
          <div className="w-[26px] bg-[#545454] flex items-center justify-center">
            <Copy />
          </div>
          <div className="flex-1 bg-[#333] flex items-center justify-center">
            <X />
          </div>
        </div>
        <div className="ml-[7px] flex h-[26px] w-[197px] rounded-[5px] bg-[#1f1f1f] overflow-hidden">
          <div className="w-[41px] bg-[#282828] flex items-center justify-center gap-[1px]">
            <Layers />
            <ChevD />
          </div>
          <div className="w-[103px] ml-[1px] bg-[#1d1d1d] flex items-center pl-[9px]">ViewLayer</div>
          <div className="w-[26px] bg-[#545454] flex items-center justify-center">
            <Copy />
          </div>
          <div className="flex-1 bg-[#333] flex items-center justify-center">
            <X />
          </div>
        </div>
      </div>
    </div>
  );
}

function StatusBar() {
  return (
    <div className="h-[28px] flex items-center text-[14.100px] text-[#a0a0a0] pl-[22px]">
      <Svg w={18} h={20}>
        <path d="M9 1 17.500 19H.5z" fill="#8e8e8e" />
        <path d="M9 7v6M9 15v2" stroke="#1d1d1d" strokeWidth="1.800" />
      </Svg>
      <span className="ml-[4px]">Active object has non-uniform scale</span>
      <span className="ml-[7px] w-[1px] h-[24px] bg-[#333]" />
      <span className="ml-[8px] flex items-center gap-[3px]">
        <Mouse b="r" />
        Select Toggle
      </span>
      <span className="ml-[14px] flex items-center gap-[3px]">
        <Mouse b="m" />
        Dolly View
      </span>
      <span className="ml-[12px] flex items-center gap-[3px]">
        <Mouse b="l" />
        Lasso Select
      </span>
      <span className="ml-auto pr-[16px] text-[#7e7e7e]">4.5.3</span>
    </div>
  );
}

export default function App() {
  return (
    <div className="w-[2500px] h-[1406px] overflow-hidden bg-[#181818] flex flex-col font-['Inter',sans-serif]">
      <TopBar />
      <div className="h-[1344px] flex">
        <div className="w-[2064px] pl-[2px] shrink-0">
          <Viewport />
          <Timeline />
        </div>
        <div className="w-[429px] ml-[5px] shrink-0">
          <Outliner />
          <Properties />
        </div>
      </div>
      <StatusBar />
    </div>
  );
}
